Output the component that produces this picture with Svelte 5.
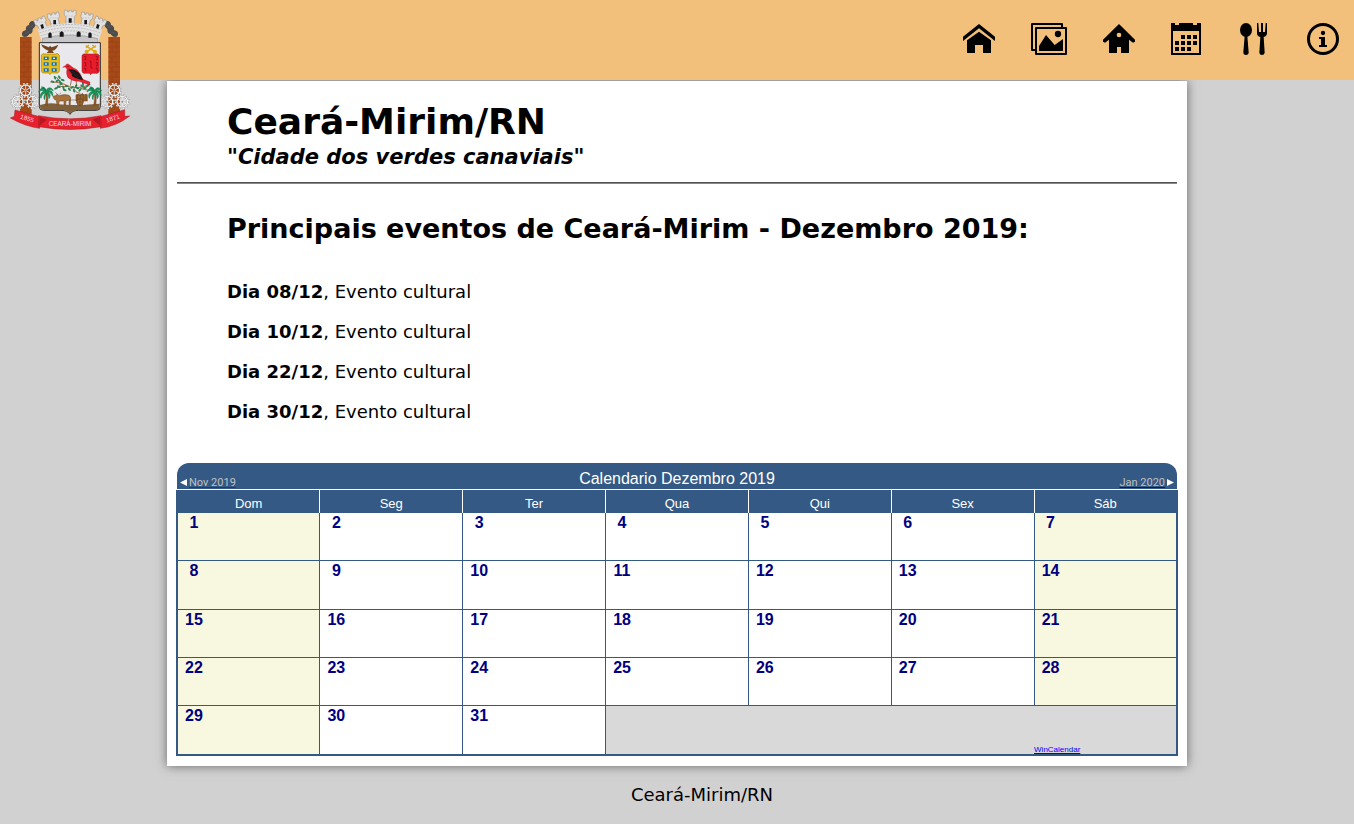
<script>
  const events = ['08/12', '10/12', '22/12', '30/12'];
  const weekdays = ['Dom', 'Seg', 'Ter', 'Qua', 'Qui', 'Sex', 'Sáb'];
  const weeks = [0, 1, 2, 3, 4].map((w) =>
    [1, 2, 3, 4, 5, 6, 7].map((d) => w * 7 + d).filter((d) => d <= 31)
  );
  const bricks = [112, 127, 142, 157, 172, 187, 202, 217, 232, 247, 262, 277, 292, 307, 322, 337];
  const spokes = [0, 60, 120];
  const gears = [[77, 271, 19], [53, 305, 19], [98, 305, 19]];
  const merlons = [
    [120, 64, -24],
    [160, 49, -12],
    [210, 41, 0],
    [260, 49, 12],
    [300, 64, 24]
  ];
  const leaves = [
    [158, 245, 20], [165, 233, 70], [172, 242, -30], [178, 232, 60], [188, 240, 20], [183, 252, -40],
    [176, 260, 30], [168, 265, -20], [190, 262, 70], [200, 258, 10], [208, 268, 50], [216, 262, -30],
    [222, 272, 70], [232, 264, 20], [240, 270, -50], [246, 258, 40], [254, 264, 0], [262, 258, -40],
    [194, 270, 20], [180, 246, 60], [249, 252, 80], [266, 252, 30], [228, 258, -60]
  ];
</script>

{#snippet chimney()}
  <rect x="60" y="111" width="35" height="240" fill="#a84a18" />
  {#each bricks as y, i}
    <path d="M60 {y + 14}H95M{i % 2 ? 72 : 84} {y}v14" stroke="#8a3e16" stroke-width="1.5" />
  {/each}
  <path d="M68 109C62 98 70 91 78 91C76 80 82 76 87 75C86 65 97 59 105 66C111 75 103 83 98 87C99 96 95 102 88 102C83 110 76 113 68 109Z" fill="#4b4a4c" />
  <path d="M76 102q5-8 12-6M88 84q5-7 11-8" stroke="#666" stroke-width="2" fill="none" />
  {#each gears as [x, y, r]}
    <g transform="translate({x} {y})" fill="none">
      <circle r={r} stroke="#888" stroke-width="7" stroke-dasharray="5 5" />
      <circle r={r} stroke="#eee" stroke-width="6" stroke-dasharray="4 6" />
      <circle r={r - 3} stroke="#888" stroke-width="5" />
      <circle r={r - 3} stroke="#f4f4f4" stroke-width="3.5" />
      {#each spokes as a}
        <path d="M0-16V16" transform="rotate({a})" stroke="#eee" stroke-width="2.5" />
      {/each}
      <circle r="3" fill="#888" />
    </g>
  {/each}
{/snippet}

{#snippet palm()}
  <path d="M136 316q5-22 1-42l4-1q5 22 2 43z" fill="#8c5a28" stroke="#654019" />
  <path d="M138 275C130 256 119 266 116 276Q124 267 132 275C121 276 119 287 123 295Q126 280 137 279C131 286 130 294 134 299Q135 286 140 279Q146 286 147 296C154 286 149 280 143 277Q153 277 158 289C161 276 153 270 145 273Q151 266 160 273C155 260 143 261 139 271Q134 258 124 261Q134 265 138 275Z" fill="#1a9655" stroke="#087344" stroke-width="1.5" />
{/snippet}

<header>
  <a class="crest" href="#inicio" aria-label="Ceará-Mirim">
    <svg viewBox="30 30 360 360" aria-hidden="true">
      {@render chimney()}
      <g transform="translate(420 0) scale(-1 1)">{@render chimney()}</g>

      <g fill="#e2e2e3" stroke="#8a8a8c" stroke-width="1.5">
        {#each merlons as [x, y, a]}
          <path transform="translate({x} {y}) rotate({a})" d="M-17-10h9v5h5v-5h8v5h5v-5h8v15l-5 4v48h-25V9l-5-4z" />
        {/each}
        <path d="M113 88Q210 52 307 88L295 125Q210 101 125 125Z" stroke="none" />
        <path d="M127 115Q210 96 293 115V128H127Z" fill="#c6c6c8" />
      </g>
      <path d="M116 91Q210 56 304 91M118 99Q210 66 302 99M122 108Q210 77 298 108M128 118Q210 91 292 118" fill="none" stroke="#aaa" stroke-width="2" stroke-dasharray="6 3" />
      <path d="M108 66h24M149 54h25M197 48h26M247 54h25M289 66h24M152 71h20M199 65h23M250 71h20" stroke="#aaa" stroke-width="1.5" stroke-dasharray="5 3" />
      <g fill="#17171a">
        <path d="M121 75l8-3 3 12-7 3zM160 60h8v13h-8zM206 55h9v13h-9zM253 60h8v13h-8zM291 72l8 3-4 12-7-3z" />
        <path d="M145 101q5-9 10 0v12h-10zM179 98q6-9 12 0v12h-12zM230 98q6-9 12 0v12h-12zM265 101q5-9 10 0v12h-10z" />
      </g>

      <path d="M118 128H301V320Q301 331 290 331H236Q216 331 210 343Q203 331 183 331H130Q118 331 118 320Z" fill="#e9e8ec" stroke="#292929" stroke-width="3" />
      <path d="M120 315Q150 306 176 313Q223 318 299 311V320Q299 330 288 330H236Q216 330 210 341Q203 330 183 330H131Q120 330 120 319Z" fill="#806039" />

      <path d="M123 133Q139 139 147 142Q150 134 154 142Q164 139 175 134Q169 150 157 152L162 159H140L146 152Q130 148 123 133Z" fill="#76451d" />
      <path d="M124 166Q128 158 134 162H166Q174 157 178 166V214Q174 222 166 219H153L150 224L146 219H132Q126 220 124 214Z" fill="#eabd16" stroke="#7e6812" stroke-width="1.5" />
      {#each [170, 187, 205] as y}
        {#each [131, 155] as x}
          <rect {x} {y} width="15" height="10" fill="#136eb4" />
          <rect x={x + 4} y={y + 3} width="6" height="4" fill="#d3f2ff" />
        {/each}
      {/each}
      <path d="M257 137L288 158M288 137L257 158" stroke="#d9aa16" stroke-width="5" />
      <g fill="none" stroke="#d9aa16" stroke-width="4"><circle cx="260" cy="155" r="4" /><circle cx="285" cy="155" r="4" /><path d="M258 143l9-8M277 135l9 8" /></g>
      <path d="M246 166Q250 160 257 162H285Q293 159 298 166V214Q295 222 287 220H276L272 224L268 220H254Q248 221 246 214Z" fill="#e71d2b" stroke="#981422" stroke-width="1.5" />
      <path d="M252 169h5v10h-4M252 188h5v10h-4M252 205h5v9M287 169h5v10h-4M287 188h5v10h-4M287 205h5v9M269 184h4v20h5" fill="none" stroke="#770b18" stroke-width="2" />

      <path d="M151 246Q187 246 207 260Q236 267 267 255M169 231Q178 243 188 254M166 264Q183 257 200 260M222 263Q222 277 241 280M241 263Q248 270 263 270" stroke="#8b5426" stroke-width="2.5" fill="none" />
      {#each leaves as [x, y, a]}
        <ellipse cx={x} cy={y} rx="6" ry="3" transform="rotate({a} {x} {y})" fill="#29834d" />
      {/each}
      <path d="M215 237l-4 20M228 239l2 19" stroke="#68401b" stroke-width="2" />
      <path d="M188 202L196 197Q201 187 210 196Q218 204 231 209Q243 221 248 238L270 246L268 255L237 244Q217 244 204 233Q197 221 201 208L196 201Z" fill="#e92131" stroke="#961625" stroke-width="1" />
      <path d="M204 209Q221 204 238 220L250 240Q228 237 216 228Q217 219 204 209Z" fill="#17171a" />
      <path d="M208 211q18 4 30 20M207 217q19 5 28 17" stroke="#5e3032" fill="none" />
      <circle cx="204" cy="199" r="1.5" />

      {@render palm()}
      <g transform="translate(145 0)">{@render palm()}</g>
      <path d="M160 293Q158 286 165 288L172 283L178 287Q194 281 207 286Q215 290 211 306V314H207V300L198 303L197 315H192V303H178L176 315H171L169 301Q162 299 160 293ZM172 283l-6-6M179 284l3-6" fill="#a6713b" stroke="#65431f" stroke-width="1.5" />
      <path d="M208 300h25M228 284h34v19h-34zM232 284v19M241 284v19M250 284v19M258 284v19M228 289l7-7 5 5 7-7 6 7 7-5" fill="#95602b" stroke="#65431f" stroke-width="1.5" />
      <circle cx="240" cy="306" r="10" fill="#9d6b35" stroke="#5e3c1c" stroke-width="2" />
      <path d="M240 297v18M231 306h18" stroke="#5e3c1c" stroke-width="1.5" />

      <g fill="#e5222c" stroke="#a51520" stroke-width="1.5">
        <path d="M45 330L119 350V385Q75 379 31 354L43 349Z" />
        <path d="M374 329L301 350V385Q350 379 389 348L374 349Z" />
        <path d="M116 347Q210 366 303 347V380Q210 397 116 380Z" />
        <path d="M119 352l20 7-21 17M300 352l-20 7 21 17" fill="#b91723" />
      </g>
      <g fill="#f2dce0" font-family="Liberation Sans, sans-serif" text-anchor="middle">
        <text x="210" y="378" font-size="19">CEARÁ-MIRIM</text>
        <text x="81" y="362" font-size="19" transform="rotate(17 81 357)">1855</text>
        <text x="339" y="362" font-size="19" transform="rotate(-17 339 357)">1871</text>
      </g>
    </svg>
  </a>

  <nav>
    <a href="#inicio" aria-label="Início">
      <svg viewBox="39 39 96 96"><path d="M39 80L87 42L135 80V93L87 55L39 93ZM51 91L87 65L123 91V129H99V105H75V129H51Z" /></svg>
    </a>
    <a href="#galeria" aria-label="Galeria">
      <svg class="wide" viewBox="243 39 108 96"><path fill="none" stroke="#000" stroke-width="6" stroke-linejoin="round" d="M255 120H246V42H336V51M258 54H348V132H258Z" /><path d="M267 123V108L288 75L314 105L339 87V123Z" /><circle cx="324" cy="72" r="9.5" /></svg>
    </a>
    <a href="#hospedagem" aria-label="Hospedagem">
      <svg viewBox="459 39 96 96"><path fill-rule="evenodd" d="M507 42L555 89V95L549 98L537 89V129H513V111H501V129H477V89L465 98L459 95V89ZM507 68a7 7 0 1 0 0 14a7 7 0 1 0 0-14Z" /></svg>
    </a>
    <a href="#eventos" aria-label="Eventos">
      <svg viewBox="63 39 96 96"><path fill-rule="evenodd" d="M63 39H75V45H87V39H129V45H141V39H153V135H63ZM69 63V129H147V63Z" /><path d="M93 75h12v12H93zM111 75h12v12h-12zM129 75h12v12h-12zM75 93h12v12H75zM93 93h12v12H93zM111 93h12v12h-12zM129 93h12v12h-12zM75 111h12v12H75zM93 111h12v12H93zM111 111h12v12h-12z" /></svg>
    </a>
    <a href="#restaurantes" aria-label="Restaurantes">
      <svg viewBox="267 39 96 96"><ellipse cx="288" cy="60" rx="18" ry="21" /><path d="M284 78H292L296 127Q296 135 288 135Q280 135 280 127ZM321 39H325L327 66H333V39H339V66H345L347 39H351V70Q351 79 341 81L344 128Q343 135 336 135Q329 135 328 128L331 81Q321 79 321 70Z" /></svg>
    </a>
    <a href="#sobre" aria-label="Sobre">
      <svg viewBox="471 39 96 96"><circle cx="519" cy="87" r="43.5" fill="none" stroke="#000" stroke-width="9" /><circle cx="519" cy="69" r="6.5" /><path d="M507 81H525V105H531V111H507V105H513V87H507Z" /></svg>
    </a>
  </nav>
</header>

<main>
  <div class="title">
    <h1>Ceará-Mirim/RN</h1>
    <p>"Cidade dos verdes canaviais"</p>
  </div>
  <hr />
  <section class="events">
    <h2>Principais eventos de Ceará-Mirim - Dezembro 2019:</h2>
    {#each events as day}
      <p><b>Dia {day}</b>, Evento cultural</p>
    {/each}
  </section>

  <section class="calendar" aria-label="Calendario">
    <div class="bar">
      <div class="step">
        <svg viewBox="0 0 7 7" aria-hidden="true"><path d="M7 0V7L0 3.5Z" /></svg>
        <a class="seen" href="#nov-2019">Nov 2019</a>
      </div>
      <h3>Calendario Dezembro 2019</h3>
      <div class="step next">
        <a href="#jan-2020">Jan 2020</a>
        <svg viewBox="0 0 7 7" aria-hidden="true"><path d="M0 0L7 3.5L0 7Z" /></svg>
      </div>
    </div>
    <table>
      <thead>
        <tr>{#each weekdays as name}<th scope="col">{name}</th>{/each}</tr>
      </thead>
      <tbody>
        {#each weeks as week}
          <tr>
            {#each week as day, i}
              <td class:weekend={i === 0 || i === 6}><span class="day">{day}</span></td>
            {/each}
            {#if week.length < 7}
              <td class="rest" colspan={6 - week.length}></td>
              <td class="rest credit"><a href="#wincalendar">WinCalendar</a></td>
            {/if}
          </tr>
        {/each}
      </tbody>
    </table>
  </section>
</main>

<footer>Ceará-Mirim/RN</footer>

<style>
  :global(body) {
    margin: 0;
    background: #d1d1d1;
    color: #000;
    font: 18px/20px 'DejaVu Sans', sans-serif;
  }
  header {
    position: relative;
    z-index: 1;
    box-sizing: border-box;
    height: 80px;
    padding: 0 15px;
    background: #f3c07b;
  }
  .crest {
    position: absolute;
    left: 10px;
    top: 10px;
    width: 120px;
  }
  .crest svg {
    display: block;
    width: 100%;
    overflow: visible;
  }
  nav {
    display: flex;
    justify-content: flex-end;
    gap: 36px;
    padding-top: 23px;
  }
  nav a {
    color: #000;
  }
  nav svg {
    display: block;
    width: 32px;
    height: 32px;
  }
  nav .wide {
    width: 36px;
  }
  main {
    box-sizing: border-box;
    max-width: 1020px;
    margin: 1px auto 0;
    padding: 19px 10px 10px;
    background: #fff;
    box-shadow: 0 0 10px #666;
  }
  .title,
  .events {
    padding: 0 50px;
  }
  h1,
  h2,
  h3,
  p {
    margin: 0;
  }
  h1 {
    font-size: 36px;
    line-height: 43px;
  }
  .title p {
    font-size: 21px;
    line-height: 28px;
    font-weight: bold;
    font-style: italic;
  }
  hr {
    height: 2px;
    margin: 11px 0 0;
    border: 0;
    background: linear-gradient(#555 50%, #888 50%);
  }
  .events {
    padding-top: 29px;
    padding-bottom: 41px;
  }
  h2 {
    margin-bottom: 37px;
    font-size: 27px;
    line-height: 32px;
  }
  .events p + p {
    margin-top: 20px;
  }
  .calendar {
    font-family: 'Liberation Sans', sans-serif;
  }
  .bar {
    display: grid;
    grid-template-columns: 1fr auto 1fr;
    align-items: end;
    box-sizing: border-box;
    height: 27px;
    padding: 0 3px;
    border-bottom: 1px solid #fff;
    border-radius: 12px 12px 0 0;
    background: #355985;
    background-clip: padding-box;
    color: #fff;
  }
  h3 {
    font-size: 16px;
    line-height: 20px;
    font-weight: normal;
  }
  .step {
    display: flex;
    align-items: center;
    gap: 2px;
    font-family: Roboto, sans-serif;
    font-size: 11px;
    line-height: 13px;
  }
  .step svg {
    width: 7px;
    height: 7px;
    fill: #fff;
  }
  .next {
    justify-content: flex-end;
  }
  .step a {
    color: #c0c0c0;
    text-decoration-color: #00f;
  }
  .step .seen {
    text-decoration-color: #551a8b;
  }
  table {
    width: calc(100% + 2px);
    height: 266px;
    margin: 0 -1px;
    table-layout: fixed;
    border-collapse: collapse;
    border: 2px solid #355985;
    border-top: 0;
  }
  th {
    height: 21px;
    padding: 5px 0 0;
    box-sizing: border-box;
    border: 1px solid #fff;
    border-width: 0 1px;
    background: #355985;
    color: #fff;
    font-size: 13px;
    line-height: 17px;
    font-weight: normal;
  }
  td {
    padding: 0;
    border: 1px solid #355985;
    background: #fff;
    vertical-align: top;
  }
  .weekend {
    background: #f8f8e1;
  }
  .day {
    display: block;
    width: 32px;
    color: #000080;
    font-size: 16px;
    line-height: 20px;
    font-weight: bold;
    text-align: center;
  }
  .rest {
    border-right: 0;
    background: #d9d9d9;
  }
  .credit {
    border-left: 0;
    font-size: 8px;
    line-height: 9px;
    vertical-align: bottom;
  }
  .credit a {
    color: #00f;
  }
  footer {
    padding: 19px 0 19px 50px;
    text-align: center;
  }
</style>
